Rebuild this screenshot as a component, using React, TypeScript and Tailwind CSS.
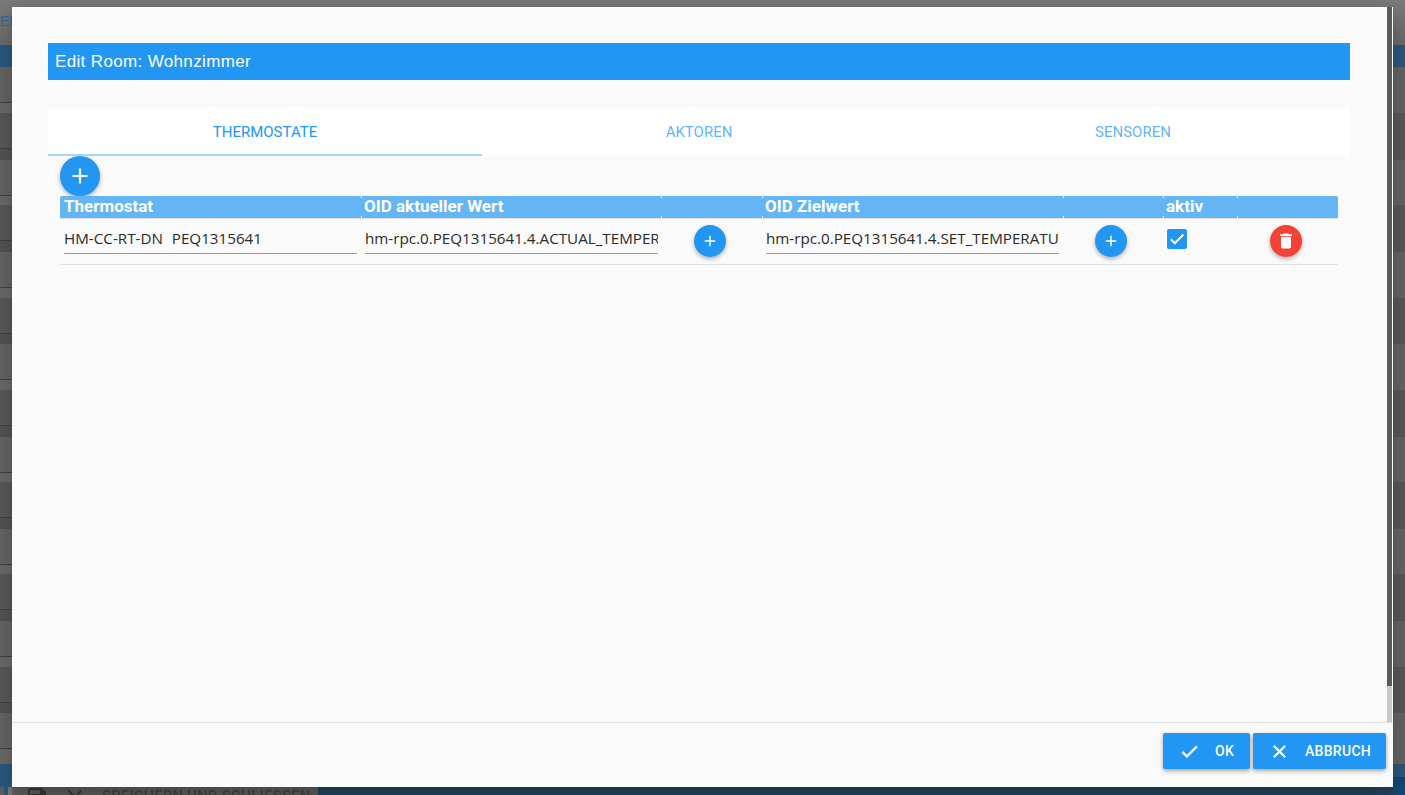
const rowHeights = [46, 47, 45, 47, 46, 46, 46, 47, 45, 47, 45, 47, 46, 46, 52];

const PLUS = "M19 13h-6v6h-2v-6H5v-2h6V5h2v6h6v2z";
const CHECK = "M9 16.17L4.83 12l-1.42 1.41L9 19 21 7l-1.41-1.41z";
const CLOSE = "M19 6.41L17.59 5 12 10.59 6.41 5 5 6.41 10.59 12 5 17.59 6.41 19 12 13.41 17.59 19 19 17.59 13.41 12z";
const TRASH = "M6 19c0 1.1.9 2 2 2h8c1.1 0 2-.9 2-2V7H6v12zM19 4h-3.5l-1-1h-5l-1 1H5v2h14V4z";
const SAVE = "M17 3H5c-1.11 0-2 .9-2 2v14c0 1.1.89 2 2 2h14c1.1 0 2-.9 2-2V7l-4-4zm-5 16c-1.66 0-3-1.34-3-3s1.34-3 3-3 3 1.34 3 3-1.34 3-3 3zm3-10H5V5h10v4z";

function Icon({ d, size, className, bold }: { d: string; size: number; className?: string; bold?: number }) {
  return (
    <svg
      width={size}
      height={size}
      viewBox="0 0 24 24"
      fill="currentColor"
      stroke={bold ? "currentColor" : "none"}
      strokeWidth={bold ?? 0}
      className={className}
    >
      <path d={d} />
    </svg>
  );
}

function Backdrop() {
  return (
    <div className="flex h-[795px] flex-col bg-[#6f6f6f]">
      <div className="h-[45px] overflow-hidden bg-gradient-to-b from-[#7b7b7b] to-[#6d6d6d] pt-[11px] font-['Liberation_Sans',sans-serif] text-[14px] text-[#2f6a9c]">
        EL
      </div>
      <div className="h-[22px] bg-[#2b5a80]" />
      {rowHeights.map((h, i) => (
        <div
          key={i}
          className={i % 2 === 0 ? "flex shrink-0 bg-[#666666]" : "flex shrink-0 bg-[#5a5a5a]"}
          style={{ height: h }}
        >
          <div className="flex w-3 flex-col">
            <div className="h-[35px] shrink-0" />
            <div className="h-px shrink-0 bg-[#444444]" />
            <div className={i % 2 === 0 ? "flex-1 bg-[#6b6b6b]" : "flex-1 bg-[#555555]"} />
          </div>
        </div>
      ))}
    </div>
  );
}

function BottomStrip() {
  return (
    <div className="absolute bottom-0 left-0 flex h-2 w-[1405px] overflow-hidden bg-[#24445f]">
      <div className="flex h-8 w-[318px] items-start bg-[#5f5f5f] text-[#383838]">
        <div className="ml-1 h-8 w-1 bg-[#2b5a80]" />
        <div className="h-8 w-1 bg-[#7a7a7a]" />
        <Icon d={SAVE} size={24} className="ml-[13px] -mt-[2px]" />
        <Icon d={CLOSE} size={24} className="ml-[14px] -mt-[2px]" />
        <span className="ml-[15px] -mt-px font-['Roboto',sans-serif] text-[14.5px] font-medium tracking-[0.4px] whitespace-nowrap text-[#444444]">
          SPEICHERN UND SCHLIESSEN
        </span>
      </div>
      <div className="flex-1" />
      <div className="h-2 w-3 bg-[#124a78]" />
    </div>
  );
}

function RightCorner() {
  return (
    <div className="absolute top-[764px] right-0 flex h-[31px] w-3 flex-col">
      <div className="h-[13px] bg-[#2b5a80]" />
      <div className="flex-1 bg-[#124a78]" />
    </div>
  );
}

function LeftCorner() {
  return <div className="absolute top-[764px] left-0 h-[23px] w-3 bg-[#2b5a80]" />;
}

function Fab({ size, color, d, iconSize }: { size: string; color: string; d: string; iconSize: number }) {
  return (
    <div className={`flex items-center justify-center rounded-full text-white shadow-[0_2px_4px_rgba(0,0,0,0.3)] ${size} ${color}`}>
      <Icon d={d} size={iconSize} />
    </div>
  );
}

function Field({ value }: { value: string }) {
  return (
    <div className="h-[35px] overflow-hidden border-b border-[#9e9e9e] pt-[9px] font-['Open_Sans',sans-serif] text-[15.2px] leading-[20px] [word-spacing:5px] whitespace-nowrap text-[#2b2b2b]">
      {value}
    </div>
  );
}

const columns = "grid grid-cols-[302px_300px_101px_301px_100px_74px_100px]";

function HeaderCell({ label, last, pad }: { label?: string; last?: boolean; pad: string }) {
  return (
    <div className="flex">
      <div className={`flex-1 whitespace-nowrap ${pad}`}>{label}</div>
      {!last && (
        <div className="flex w-px flex-col justify-between">
          <div className="h-[2px] bg-white/80" />
          <div className="h-[2px] bg-white/80" />
        </div>
      )}
    </div>
  );
}

function Table() {
  return (
    <div className="ml-3 mr-3">
      <div className={`${columns} h-[23px] rounded-t-[2px] border-b border-[#e0e0e0] bg-[#64b5f6] font-['Roboto',sans-serif] text-[17px] leading-[20px] font-bold text-white`}>
        <HeaderCell label="Thermostat" pad="pl-1" />
        <HeaderCell label="OID aktueller Wert" pad="pl-[2px]" />
        <HeaderCell pad="" />
        <HeaderCell label="OID Zielwert" pad="pl-[2px]" />
        <HeaderCell pad="" />
        <HeaderCell label="aktiv" pad="pl-[2px]" />
        <HeaderCell last pad="" />
      </div>
      <div className={`${columns} h-[46px] border-b border-[#e0e0e0]`}>
        <div className="pr-[5px] pl-1">
          <Field value="HM-CC-RT-DN PEQ1315641" />
        </div>
        <div className="pr-1 pl-[3px]">
          <Field value="hm-rpc.0.PEQ1315641.4.ACTUAL_TEMPERATURE" />
        </div>
        <div className="flex justify-center pt-[6px] pr-[5px]">
          <Fab size="h-8 w-8" color="bg-[#2196f3]" d={PLUS} iconSize={18} />
        </div>
        <div className="pr-[5px] pl-[3px]">
          <Field value="hm-rpc.0.PEQ1315641.4.SET_TEMPERATURE" />
        </div>
        <div className="flex justify-center pt-[6px] pr-[6px]">
          <Fab size="h-8 w-8" color="bg-[#2196f3]" d={PLUS} iconSize={18} />
        </div>
        <div className="pt-[10px] pl-[3px]">
          <div className="flex h-5 w-5 items-center justify-center rounded-[2px] bg-[#2196f3] text-white">
            <Icon d={CHECK} size={18} bold={1} />
          </div>
        </div>
        <div className="flex justify-center pt-[6px] pr-1">
          <Fab size="h-8 w-8" color="bg-[#f44336]" d={TRASH} iconSize={20} />
        </div>
      </div>
    </div>
  );
}

function Tabs() {
  const base = "flex flex-1 items-center justify-center border-b-2 pt-[2px] font-['Roboto',sans-serif] text-[15px]";
  return (
    <div className="flex h-12 bg-white">
      <div className={`${base} border-[#a6d5fa] text-[#2196f3]`}>THERMOSTATE</div>
      <div className={`${base} border-transparent text-[#64b5f6]`}>AKTOREN</div>
      <div className={`${base} border-transparent text-[#64b5f6]`}>SENSOREN</div>
    </div>
  );
}

function ActionButton({ d, label, width, gap }: { d: string; label: string; width: string; gap: string }) {
  return (
    <div className={`flex h-9 items-center rounded-[2px] bg-[#2196f3] pl-4 font-['Roboto',sans-serif] text-[14px] font-medium tracking-[0.3px] text-white shadow-[0_2px_4px_rgba(0,0,0,0.35)] ${width}`}>
      <Icon d={d} size={21} bold={0.8} />
      <span className={gap}>{label}</span>
    </div>
  );
}

function Modal() {
  return (
    <div className="absolute top-[7px] left-3 flex h-[780px] w-[1381px] flex-col bg-[#fafafa] shadow-[0_8px_24px_rgba(0,0,0,0.3)]">
      <div className="relative min-h-0 flex-1 pt-9 pr-[43px] pl-9">
        <div className="flex h-[37px] items-center bg-[#2196f3] pl-[7px] font-['Liberation_Sans',sans-serif] text-[17px] tracking-[0.35px] text-white">
          Edit Room: Wohnzimmer
        </div>
        <div className="mt-7">
          <Tabs />
        </div>
        <div className="ml-3 h-10">
          <Fab size="h-10 w-10" color="bg-[#2196f3]" d={PLUS} iconSize={26} />
        </div>
        <Table />
        <div className="absolute top-0 right-px bottom-0 flex w-[5px] flex-col">
          <div className="h-[679px] bg-[#5a5a5a]" />
          <div className="flex-1 bg-[#c8c8c8]" />
        </div>
      </div>
      <div className="flex h-[65px] justify-end gap-[3px] border-t border-[#e0e0e0] pt-[10px] pr-[7px]">
        <ActionButton d={CHECK} label="OK" width="w-[87px]" gap="ml-[15px]" />
        <ActionButton d={CLOSE} label="ABBRUCH" width="w-[133px]" gap="ml-[15px]" />
      </div>
    </div>
  );
}

export default function App() {
  return (
    <div className="relative h-[795px] w-[1405px] overflow-hidden">
      <Backdrop />
      <LeftCorner />
      <RightCorner />
      <BottomStrip />
      <Modal />
    </div>
  );
}
